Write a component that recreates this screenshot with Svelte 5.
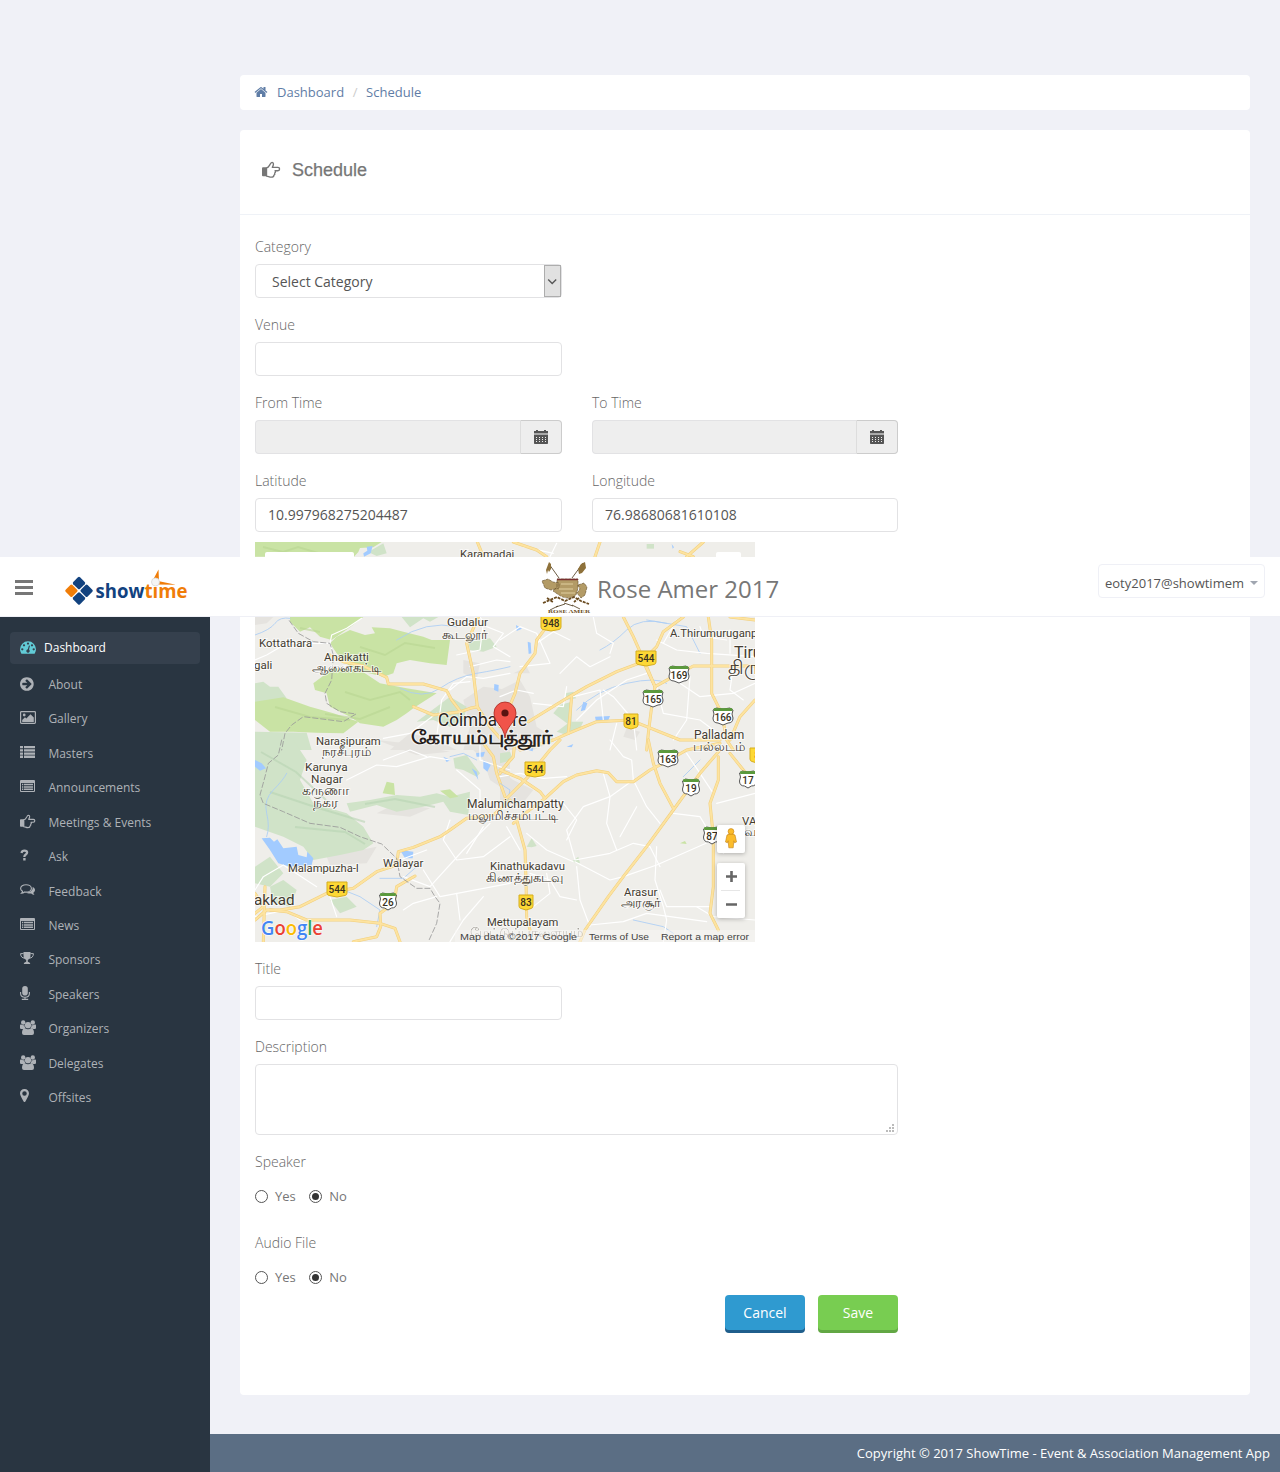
<script>
  const nav = [
    ['arrow', 'About'], ['picture', 'Gallery'], ['list', 'Masters'], ['listalt', 'Announcements'],
    ['hand', 'Meetings & Events'], ['question', 'Ask'], ['comments', 'Feedback'], ['listalt', 'News'],
    ['trophy', 'Sponsors'], ['mic', 'Speakers'], ['users', 'Organizers'], ['users', 'Delegates'], ['pin', 'Offsites']
  ];

  // Map geometry is split in four tiles, each with its own 3x coordinate space.
  const tiles = [
    {
      t: 'translate(-5 -2) scale(.33333)',
      green: ['M15 6H395L370 22 330 24 325 36 312 50H15Z', 'M120 231H340L300 262 245 300 210 290 180 262 150 275 120 245Z', 'M260 290L300 270 345 285 375 280 365 262 420 265 460 275 520 290 545 300 600 300 590 375 540 370 480 360 440 370 430 400 400 410 340 395 300 380 260 340 240 310Z', 'M190 430L250 385 330 390 390 430 470 445 560 460 520 485 490 505 470 520 440 540 400 560 330 550 300 530 240 500 230 460 195 450Z', 'M15 485L100 472 180 500 250 520 325 545 280 580 200 578 130 575 60 575 15 540Z'],
      pale: ['M15 430L40 425 60 440 85 440 110 475 60 500 15 510Z', 'M15 575L170 578 185 630H15Z', 'M655 305L720 295 740 320 700 335 660 330Z', 'M455 231H565L540 245 520 235 480 262Z', 'M560 500L600 470 650 500 640 545 600 560 550 540 500 545Z', 'M355 36L400 10 410 40 380 48Z'],
      grey: ['M640 480L700 440 780 450V630H640L660 560Z', 'M640 360L690 370 680 420 640 400Z', 'M420 630L480 580 560 600 620 630Z', 'M15 231H70L50 250 15 255Z'],
      water: ['M350 20L368 18 362 40 342 50 340 40 352 32Z', 'M733 432L746 435 745 455 732 450Z'],
      stream: ['M15 285Q60 270 75 250T120 235', 'M450 445Q520 480 570 445T680 400 780 380', 'M440 300Q530 240 620 260'],
      minor: ['M240 310L245 285 290 265 335 235', 'M240 310L250 345 270 360', 'M15 360L50 345 110 310 240 310', 'M690 231L710 260 760 280 730 320 780 350', 'M600 450L650 410 700 415 780 400', 'M560 590L575 480 610 430 660 425', 'M700 250L690 330 620 345', 'M660 380L740 360 780 365', 'M400 595L480 580 560 520'],
      major: ['M240 345L280 365 340 378 410 412 415 432 520 432 590 452 605 480 632 515 660 505 682 500', 'M685 231L650 310 670 400 682 500 720 560 755 600', 'M490 500L550 525 632 515', 'M682 6L700 50'],
      dash: ['M118 242L145 280 190 305 240 310 250 345 245 420 225 460 230 490 270 515 318 522 280 545 240 540 160 530 125 555 105 580 95 630']
    },
    {
      t: 'translate(245 -2) scale(.33333)',
      green: [],
      pale: ['M195 460L220 455 228 475 200 480Z', 'M180 495L215 485 215 560 160 520Z', 'M170 575L210 545 250 545 240 565 200 585Z', 'M440 12H462V26H440Z'],
      grey: ['M0 450L60 420 90 470 110 560 170 600 100 630H0Z', 'M370 590L380 565 420 575 405 600Z', 'M40 400L80 380 90 400Z'],
      water: ['M48 255L66 266 50 273Z', 'M83 305L92 308 94 340 86 342Z', 'M250 485L262 490 255 510 242 514Z', 'M285 530L330 528 325 540 288 544Z', 'M515 12L522 22 518 26Z'],
      stream: ['M230 510Q290 450 380 430T500 430', 'M300 330Q340 310 380 270T500 250', 'M440 240L560 260 600 340'],
      minor: ['M0 300L60 260 110 280 150 370 60 380', 'M110 310L160 275 210 300', 'M180 400L230 350 270 380 330 350', 'M280 231L290 280 340 310 330 340', 'M220 470L300 450 310 540', 'M230 540L290 480 380 420 440 400', 'M470 300L530 330 620 340 765 350', 'M530 240L490 310', 'M470 440L490 520 600 540 680 600', 'M540 430L600 470 700 460 765 430', 'M570 410L560 540 520 600', 'M690 270V340', 'M700 380L690 450 730 480', 'M350 550L330 630', 'M70 20L160 40', 'M170 10L150 50', 'M0 470L50 450 100 460', 'M600 260L610 290 680 300', 'M310 450L340 470 400 540 410 630', 'M100 490L190 500 200 440'],
      major: ['M140 260L110 300 105 340 60 400 45 460 20 520 0 560', 'M85 545L200 475 260 440 350 395 430 365 465 440', 'M370 231L400 290 440 380 465 440 455 500 445 580 440 630', 'M550 231L490 275 470 320 430 360', 'M215 470L205 580 160 600 60 630', 'M205 580L290 545 390 540 440 560 540 600 660 600', 'M465 440L510 415 580 378 765 378', 'M625 231L635 300 635 370 635 460 665 520 680 600 700 630', 'M765 480L720 530 690 600', 'M690 231L765 240', 'M300 6L285 50', 'M40 6L110 30 140 50', 'M610 6L560 50', 'M540 35L580 50'],
      dash: []
    },
    {
      t: 'translate(-5 198) scale(.33333)',
      green: ['M398 160L410 125 432 130 435 165Z', 'M570 152L600 148 625 170 600 175Z'],
      pale: ['M15 0H130L170 60 150 120 190 190 290 220 340 260 370 310 340 330 270 345 190 360 160 320 100 290 15 260Z', 'M290 190L360 180 440 165 510 170 560 160 600 170 660 155 655 225 600 215 580 185 520 200 440 215 380 195 300 215Z', 'M610 55L650 45 690 100 680 110 640 90 615 85Z', 'M15 380L60 350 100 400 60 440 15 430Z', 'M60 440L100 420 140 450 120 500 70 490Z', 'M240 480L290 470 320 500 270 520Z'],
      grey: ['M640 0H780V160L720 120 700 60Z', 'M380 220L440 190 540 205 480 230Z', 'M230 350L380 320 350 370 240 375Z', 'M380 0L470 10 600 35 500 45Z'],
      water: ['M15 60L35 70 48 85 30 92 15 80Z', 'M35 295L60 293 72 305 82 298 100 325 140 320 145 345 170 352 172 335 190 355 185 375 120 380 85 370 60 330Z', 'M450 330L490 335 488 355 465 355Z', 'M678 40L705 35 700 50 680 50Z', 'M700 60L722 75 712 95 700 85Z', 'M665 85L680 95 685 120Z', 'M580 50L602 60 590 66Z'],
      stream: ['M50 290Q60 260 50 220T70 150 110 100', 'M280 450L330 470 390 510 380 560', 'M390 415H460L500 380', 'M600 50L640 40 680 60'],
      minor: ['M290 120L350 90 380 75 440 80 540 50 600 60', 'M400 60L480 30 530 50', 'M620 90L690 150V190', 'M690 0L690 60 780 90', 'M15 450L40 410 100 375 200 440', 'M240 470L260 530', 'M460 410L540 440 640 330 720 250', 'M600 240L580 300 620 360 700 350 780 290', 'M520 390L570 470 780 430', 'M450 360L530 330', 'M650 340L700 260', 'M700 470L640 540 600 605', 'M460 510L490 490 560 470', 'M15 530L110 510 150 540 230 540', 'M620 460L630 540'],
      major: ['M780 180L730 225 650 235 600 270 570 290 490 322 445 335 440 375 380 395 310 445 230 460 150 500 90 510 50 510 15 540', 'M60 510L110 515 170 540 300 540 390 550 435 565 450 605', 'M495 408L440 440 432 490 390 520 392 560 380 590 310 605', 'M700 10L730 50 740 100 765 170', 'M750 100L780 60', 'M45 440L40 605', 'M15 460L40 500 15 520'],
      dash: ['M95 0L85 45 55 70 45 110 30 165 40 190 100 215 180 250 270 262 330 290 395 312 440 355 450 410 500 445 540 445 555 470 570 490 560 550 535 605']
    },
    {
      t: 'translate(245 198) scale(.33333)',
      green: ['M540 310L555 303 560 312Z'],
      pale: ['M80 320L95 295 110 318 95 322Z', 'M0 40L30 35 40 60 0 70Z', 'M215 365L235 350 240 370Z'],
      grey: ['M0 90L40 120 100 150 60 200 0 180Z'],
      water: ['M85 20L100 22 98 34 84 30Z', 'M200 20L220 12 215 22Z'],
      stream: ['M400 540L490 560 520 580', 'M0 130L30 150 20 200', 'M550 110L600 60'],
      minor: ['M330 0L370 50 395 60 400 120 440 200 480 250', 'M400 120L330 170 290 185 250 200 200 270 225 360 330 340 400 310 450 320 480 380', 'M225 365L330 420 370 410 470 375 550 340 640 300', 'M80 280L140 330 220 365', 'M230 380L240 480 270 560', 'M470 320L465 420 490 500 500 540 490 605', 'M270 555L370 545 440 520 620 545', 'M140 190L190 190 230 240 200 300', 'M480 450L500 500 630 500', 'M560 40L640 160', 'M520 220L600 230 630 280', 'M0 110L60 100 130 115 200 110', 'M310 100L330 170 320 250 350 330', 'M670 340L720 260', 'M20 260L60 330', 'M90 400L150 420 180 470 230 480', 'M410 200L360 290', 'M140 400L150 460 100 500', 'M650 190L765 160', 'M590 500L640 530 765 540'],
      major: ['M0 90L60 115 120 155 135 175 190 125 230 105 290 92 325 98 350 125 400 125 450 90 480 75 560 30 660 10', 'M15 180L85 110 150 30 180 0', 'M660 30L600 100 520 210 440 320 370 410 325 470 255 570 240 605', 'M445 0L460 70 480 130 520 205', 'M50 240L75 330 78 420 80 530 90 570', 'M135 175L75 220 40 250', 'M655 50L655 120 630 190 640 290 640 440 630 520 655 570', 'M690 40L730 90 765 130', 'M45 0L40 50 5 90'],
      dash: []
    }
  ];

  // text, x, baseline, font size
  const labels = [
    ['Karamadai', 460, 558, 11.3], ['Gudalur', 447, 626, 11.8], ['கூடலூர்', 442, 639, 13], ['Kottathara', 259, 647, 11.400],
    ['Anaikatti', 324, 661, 11.4], ['ஆனைகட்டி', 312, 672, 12.8], ['gali', 254, 669, 11.5], ['A.Thirumuruganp', 670, 637, 11.3],
    ['Narasipuram', 316, 745, 11.3], ['நரசீபுரம்', 322, 756, 12.7], ['Karunya', 305, 771, 11.8], ['Nagar', 311, 783, 11.8],
    ['கருணா', 302, 795, 13.6], ['நகர', 313, 807, 13.6], ['Malumichampatty', 467, 808, 12], ['மலுமிச்சம்பட்டி', 468, 820, 12.9],
    ['Walayar', 383, 867, 11.4], ['Malampuzha-I', 288, 872, 11.2], ['Kinathukadavu', 490, 870, 11.4], ['கிணத்துகடவு', 486, 882, 12.8],
    ['Arasur', 624, 896, 11.4], ['அரசூர்', 621, 907, 12.7], ['Mettupalayam', 487, 926, 11.2], ['Palladam', 694, 739, 12],
    ['பல்லடம்', 693, 751, 13.1], ['VA', 742, 825, 11.5], ['வ', 744, 836, 12.5], ['akkad', 254, 905, 15.2],
    ['Tiru', 734, 658, 16], ['திரு', 728, 674, 19]
  ];
  const yellow = [['948', 551, 623], ['544', 646, 658], ['81', 631, 721], ['544', 535, 769], ['544', 337, 889], ['83', 526, 902], ['8', 757, 755]];
  const white = [['169', 679, 674], ['165', 653, 698], ['166', 723, 716], ['163', 668, 758], ['19', 691, 787], ['17', 748, 779], ['87', 712, 835], ['26', 388, 901]];
</script>

{#snippet icon(name)}
  {#if name === 'dash'}
    <svg class="ic" viewBox="0 0 1792 1792"><path fill="currentColor" fill-rule="evenodd" d="M1792 1152q0 261-141 483-19 29-54 29H195q-35 0-54-29Q0 1414 0 1152 0 780 262 518T896 256t634 262 262 634zM256 1024a128 128 0 100 256 128 128 0 000-256zM448 576a128 128 0 100 256 128 128 0 000-256zM896 384a128 128 0 100 256 128 128 0 000-256zM1344 576a128 128 0 100 256 128 128 0 000-256zM1536 1024a128 128 0 100 256 128 128 0 000-256zM1004 1185l101-382q6-26-7.500-48.500t-38.500-29.500-48 6.500-30 39.500l-101 382q-60 5-107 43.500t-63 98.500q-20 77 20 146t117 89 146-20 89-117q16-60-6-117t-72-91z" /></svg>
  {:else if name === 'arrow'}
    <svg class="ic" viewBox="128 128 1792 1792"><path fill="currentColor" d="M1413 896q0-27-18-45l-91-91-362-362q-18-18-45-18t-45 18l-91 91q-18 18-18 45t18 45l189 189h-502q-26 0-45 19t-19 45v128q0 26 19 45t45 19h502l-189 189q-19 19-19 45t19 45l91 91q18 18 45 18t45-18l362-362 91-91q18-18 18-45zm251 0q0 209-103 385.500t-279.500 279.500-385.500 103-385.500-103-279.500-279.500-103-385.500 103-385.500 279.500-279.500 385.500-103 385.500 103 279.500 279.500 103 385.500z" transform="translate(0 128)" /></svg>
  {:else if name === 'picture'}
    <svg class="ic" viewBox="0 0 16 16"><rect x=".6" y="1.6" width="14.800" height="11.800" rx=".8" fill="none" stroke="currentColor" stroke-width="1.200" /><circle cx="4.200" cy="5" r="1.400" fill="currentColor" /><path fill="currentColor" d="M2.200 12V10L5 7.300l1.300 1.300 4.200-4.400L13.800 7.500V12z" /></svg>
  {:else if name === 'list'}
    <svg class="ic" viewBox="0 0 16 16"><path fill="currentColor" d="M0 1h3v2.300H0zM4 1h11v2.300H4zM0 4.200h3v2.300H0zM4 4.200h11v2.300H4zM0 7.400h3v2.300H0zM4 7.400h11v2.300H4zM0 10.600h3v2.300H0zM4 10.600h11v2.300H4z" /></svg>
  {:else if name === 'listalt'}
    <svg class="ic" viewBox="0 0 16 16"><path fill="currentColor" fill-rule="evenodd" d="M1 1h13q1 0 1 1v10q0 1-1 1H1q-1 0-1-1V2q0-1 1-1zm0 3v8h13V4zM2 4.800h1.300v1.500H2zM4 4.800h9v1.500H4zM2 7.200h1.300v1.500H2zM4 7.200h9v1.500H4zM2 9.600h1.300v1.500H2zM4 9.600h9v1.500H4z" /></svg>
  {:else if name === 'hand'}
    <svg class="ic" viewBox="0 0 16 16"><path fill="currentColor" d="M.8 5.200H4v7.600H.8q-.8 0-.8-.8V6q0-.8.8-.8z" /><path fill="none" stroke="currentColor" stroke-width="1.150" stroke-linejoin="round" d="M3.800 5.800C5.600 5.600 6.200 3.600 7 2.500c.5-.8.700-1.300 1.500-1.300 1.600.2 1.400 2 .2 4.200h4.700a1.400 1.400 0 010 2.800H11c.6.7.3 1.600-.3 2 .3.900-.1 1.500-.7 1.800 0 1.300-.7 1.600-2.200 1.600-1.800 0-2.500-.9-4-.9z" /></svg>
  {:else if name === 'question'}
    <svg class="ic" viewBox="0 0 16 16"><path fill="none" stroke="currentColor" stroke-width="2.300" d="M1.500 4.900C1.900 3.200 3 2.600 4.400 2.600c1.600 0 2.700.8 2.700 2 0 1.900-2.700 1.800-2.700 3.900v.4" /><path fill="currentColor" d="M3.200 10h2.400v2.500H3.200z" /></svg>
  {:else if name === 'comments'}
    <svg class="ic" viewBox="0 0 16 16"><path fill="none" stroke="currentColor" stroke-width="1.150" d="M6 1.700c3 0 5.400 1.600 5.400 3.700S9 9.100 6 9.100q-.8 0-1.500-.15Q3.200 10.100 1.500 10.200q1-.8 1-2C1.300 7.500.6 6.500.6 5.400.6 3.300 3 1.700 6 1.700z" /><path fill="currentColor" d="M12.600 4.100c1.500.7 2.400 1.700 2.400 2.900 0 1.100-.7 2-1.700 2.700.1.900.6 1.500 1.300 2-1.500 0-2.600-.5-3.300-1.300-2 .3-4.100 0-5.300-.9 3.800.1 7.200-1.600 6.600-5.400z" /></svg>
  {:else if name === 'trophy'}
    <svg class="ic" viewBox="0 0 16 16"><path fill="currentColor" d="M3.500 1h7v3.500c0 2.500-1.300 3.700-2.700 4.500v1.500c0 .8 2.500.7 2.500 2.500H3.700c0-1.800 2.500-1.700 2.500-2.500V9C4.800 8.200 3.500 7 3.500 4.500z" /><path fill="none" stroke="currentColor" d="M3.600 2.600H.6c0 3 1.500 4.400 4.200 4.600M10.400 2.600h3c0 3-1.500 4.400-4.200 4.600" /></svg>
  {:else if name === 'mic'}
    <svg class="ic" viewBox="0 0 16 16"><rect x="2.200" y="0" width="5.600" height="9.600" rx="2.800" fill="currentColor" /><path fill="none" stroke="currentColor" stroke-width="1.100" d="M.6 6v1.500c0 2.400 2 3.700 4.400 3.700s4.400-1.300 4.400-3.700V6M5 11v2.400M1.800 13.400h6.400" /></svg>
  {:else if name === 'users'}
    <svg class="ic" viewBox="0 0 16 16"><g fill="currentColor"><circle cx="3.200" cy="2.500" r="2.200" /><circle cx="12.800" cy="2.500" r="2.200" /><circle cx="8" cy="5.200" r="3.100" /><path d="M0 5.500Q0 4 1.200 4.500q1.800 1 3.300.4-.2 2 1 3.200-1.300 0-2 .9H1.200Q0 9 0 7.900zM16 5.500q0-1.500-1.200-1-1.800 1-3.300.4.200 2-1 3.200 1.300 0 2 .9h2.300Q16 9 16 7.900zM2 13q0-4.700 3-4.700 3 2 6 0 3 0 3 4.700 0 2-2 2H4q-2 0-2-2z" /></g></svg>
  {:else if name === 'pin'}
    <svg class="ic" viewBox="0 0 16 16"><path fill="currentColor" fill-rule="evenodd" d="M4.500 0A4.400 4.400 0 019 4.500C9 6.200 7 9.500 5.400 12.600q-.9 1-1.800 0C2 9.500 0 6.200 0 4.500A4.400 4.400 0 014.500 0zm0 2.200a2.200 2.200 0 100 4.500 2.200 2.200 0 000-4.500z" /></svg>
  {:else if name === 'home'}
    <svg class="ic" viewBox="0 0 1792 1792"><path fill="currentColor" d="M1472 992v480q0 26-19 45t-45 19h-384v-384h-256v384h-384q-26 0-45-19t-19-45v-480q0-1 .5-3t.5-3l575-474 575 474q1 2 1 6zm223-69l-62 74q-8 9-21 11h-3q-13 0-21-7l-692-577-692 577q-12 8-24 7-13-2-21-11l-62-74q-8-10-7-23.500t11-21.500l719-599q32-26 76-26t76 26l244 204v-195q0-14 9-23t23-9h192q14 0 23 9t9 23v408l219 182q10 8 11 21.500t-7 23.500z" /></svg>
  {:else if name === 'calendar'}
    <svg class="cal" viewBox="0 0 14 14"><path fill="currentColor" fill-rule="evenodd" d="M2 0h2v1h6V0h2v1h2v2H0V1h2zM0 5h14v8.200q0 .8-.8.800H.8q-.8 0-.8-.8zm2 2v1h1V7zm3 0v1h1V7zm3 0v1h1V7zm3 0v1h1V7zM2 9v1h1V9zm3 0v1h1V9zm3 0v1h1V9zm3 0v1h1V9zM2 11v1h1v-1zm3 0v1h1v-1zm3 0v1h1v-1zm3 0v1h1v-1z" /><path fill="#aaa" d="M0 3h14v2H0z" /></svg>
  {/if}
{/snippet}

{#snippet radios()}
  <div class="radios">
    <span class="dot"></span><span class="opt">Yes</span>
    <span class="dot on"></span><span class="opt">No</span>
  </div>
{/snippet}

<div class="page">
  <aside>
    <div class="active">{@render icon('dash')}<span>Dashboard</span></div>
    <nav>
      {#each nav as [ic, text]}
        <div class="item">{@render icon(ic)}<span>{text}</span></div>
      {/each}
    </nav>
  </aside>

  <div class="content">
    <main>
      <div class="crumbs">{@render icon('home')}<span>Dashboard</span><i>/</i><span>Schedule</span></div>
      <section class="panel">
        <div class="head">{@render icon('hand')}<h1>Schedule</h1></div>
        <div class="form">
          <div class="field half"><div class="label">Category</div>
            <div class="input select"><span>Select Category</span><b><svg viewBox="0 0 15 30"><path d="M3.200 13.500l4 4 4-4" fill="none" stroke="#555" stroke-width="1.300" /></svg></b></div>
          </div>
          <div class="field half"><div class="label">Venue</div><div class="input"></div></div>
          <div class="row">
            {#each ['From Time', 'To Time'] as name}
              <div class="field"><div class="label">{name}</div>
                <div class="group"><div class="input off"></div><div class="addon">{@render icon('calendar')}</div></div>
              </div>
            {/each}
          </div>
          <div class="row">
            <div class="field"><div class="label">Latitude</div><div class="input value">10.997968275204487</div></div>
            <div class="field"><div class="label">Longitude</div><div class="input value">76.98680681610108</div></div>
          </div>

          <svg class="map" viewBox="0 0 500 400">
            <rect width="500" height="400" fill="#efeeea" />
            {#each tiles as t}
              <g transform={t.t}>
                {#each t.grey as d}<path {d} fill="#e5e3df" />{/each}
                {#each t.pale as d}<path {d} fill="#d0e3c8" />{/each}
                {#each t.green as d}<path {d} fill="#c9e3a4" />{/each}
                {#each t.water as d}<path {d} fill="#a2cbff" />{/each}
              </g>
            {/each}
            <g fill="none" stroke="#b9d693" stroke-width="2" opacity=".6">
              <path d="M8 5l20 5 15-5 20 6M45 86l20 4M105 105l25 8 20-12 30 5M90 150l25 8 30-8 10 8M70 172l35 5 30-12M20 165l35 10 40 3" />
              <path stroke="#b8d3b3" d="M6 210l35 20 30 28M15 250l45 15 50 15M40 285l50 5 20 12M110 262l30-5 40 8" />
            </g>
            {#each tiles as t}
              <g transform={t.t} fill="none" stroke-linejoin="round" stroke-linecap="round">
                {#each t.stream as d}<path {d} stroke="#a9cdf5" stroke-width="2.500" />{/each}
                {#each t.minor as d}<path {d} stroke="#fff" stroke-width="3.500" />{/each}
                {#each t.major as d}<path {d} stroke="#f1cf7c" stroke-width="9" />{/each}
                {#each t.major as d}<path {d} stroke="#fde3a0" stroke-width="6" />{/each}
                {#each t.dash as d}<path {d} stroke="#999" stroke-width="2.500" stroke-dasharray="16 8" />{/each}
              </g>
            {/each}
            <g transform="translate(-255 -542)">
              {#each yellow as [n, x, y]}
                <path d="M{x - (n.length > 2 ? 10 : 7)} {y - 7}h{n.length > 2 ? 20 : 14}v11q0 2-2 2.500l-{n.length > 2 ? 8 : 5} 1.500-{n.length > 2 ? 8 : 5}-1.500q-2-.5-2-2.500z" fill="#fdd835" stroke="#d5ad1f" />
                <text class="num" {x} y={y + 3.500}>{n}</text>
              {/each}
              {#each white as [n, x, y]}
                {@const w = n.length > 2 ? 10 : 8.500}
                <path d="M{x - w} {y - 6}q2-1 3-2l{w - 3} 1 {w - 3}-1q1 1 3 2-2 4 0 8 0 5-5 5l-{w - 5} 2-{w - 5}-2q-5 0-5-5 2-4 0-8z" fill="#fff" stroke="#555" />
                <path d="M{x - w + 1} {y - 5.500}h{2 * w - 2}v-1.800h-{2 * w - 2}z" fill="#5b9a3c" stroke="#5b9a3c" />
                <text class="num" {x} y={y + 4.500}>{n}</text>
              {/each}
              {#each labels as [s, x, y, size]}<text class="place" {x} {y} font-size={size}>{s}</text>{/each}
              <text class="place city" x="438" y="726" font-size="17.500" textLength="89" lengthAdjust="spacingAndGlyphs">Coimbatore</text>
              <text class="place city bold" x="411" y="743.500" font-size="19" textLength="142" lengthAdjust="spacingAndGlyphs">கோயம்புத்தூர்</text>
              <path d="M505 738c-1.500-13-11-15-11-25a11 11 0 0122 0c0 10-9.500 12-11 25z" fill="#f0544a" stroke="#a92720" stroke-width=".8" /><circle cx="505" cy="713" r="3.600" fill="#571411" />
              <text class="place" x="470" y="937" font-size="12.500" opacity=".5">மேட்டுப்பாளையம்</text>
              <rect x="455" y="930" width="300" height="12" fill="#f7f6f3" opacity=".5" />
              <g class="legal"><text x="460" y="940" textLength="117" lengthAdjust="spacingAndGlyphs">Map data ©2017 Google</text><text x="589" y="940" textLength="60" lengthAdjust="spacingAndGlyphs">Terms of Use</text><text x="661" y="940" textLength="88" lengthAdjust="spacingAndGlyphs">Report a map error</text></g>
              <text class="google" x="261" y="934.500" textLength="62" lengthAdjust="spacingAndGlyphs"><tspan fill="#4285f4">G</tspan><tspan fill="#ea4335">o</tspan><tspan fill="#fbbc05">o</tspan><tspan fill="#4285f4">g</tspan><tspan fill="#34a853">l</tspan><tspan fill="#ea4335">e</tspan></text>
              <g fill="#fff"><rect x="265" y="552" width="89" height="29" rx="2" /><rect x="716" y="552" width="25" height="25" rx="2" /></g>
              <g class="ctl"><rect x="717" y="825" width="28" height="28" rx="2" /><rect x="717" y="863" width="28" height="55" rx="2" /></g>
              <path d="M721 890.500h19" stroke="#e6e6e6" /><path d="M726 876.500h11M731.500 871v11M726 904.500h11" stroke="#666" stroke-width="2.600" />
              <g fill="#fbbc2b" stroke="#c27f10" stroke-width=".6"><path d="M727 835q4-3 8 0l1.500 7-2 .8-.7-2-.6 7h-4.400l-.6-7-.7 2-2-.8z" /><circle cx="731" cy="831.500" r="2.900" /></g>
            </g>
          </svg>

          <div class="field half"><div class="label">Title</div><div class="input"></div></div>
          <div class="field tall"><div class="label">Description</div>
            <div class="input area"><svg viewBox="0 0 9 9"><path fill="#bbb" d="M6 0h2v2H6zM6 3h2v2H6zM6 6h2v2H6zM3 3h2v2H3zM3 6h2v2H3zM0 6h2v2H0z" /></svg></div>
          </div>
          <div class="choice"><div class="label">Speaker</div>{@render radios()}</div>
          <div class="choice"><div class="label">Audio File</div>{@render radios()}</div>
          <div class="buttons"><button class="cancel">Cancel</button><button class="save">Save</button></div>
        </div>
      </section>
    </main>
    <footer>Copyright © 2017 ShowTime - Event &amp; Association Management App</footer>
  </div>

  <header>
    <div class="left">
      <svg class="bars" viewBox="0 0 18 15"><path fill="#777" d="M0 0h18v3H0zM0 6h18v3H0zM0 12h18v3H0z" /></svg>
      <svg class="logo" viewBox="64 567 125 42">
        <g fill="#12427f"><rect x="74.200" y="578.300" width="9.600" height="9.600" rx="1.500" transform="rotate(45 79 583.100)" /><rect x="81.800" y="585.900" width="9.600" height="9.600" rx="1.500" transform="rotate(45 86.600 590.700)" /><rect x="74.200" y="593.600" width="9.600" height="9.600" rx="1.500" transform="rotate(45 79 598.400)" /></g>
        <rect x="66.600" y="585.900" width="9.600" height="9.600" rx="1.500" fill="#f07d08" transform="rotate(45 71.400 590.700)" />
        <text x="95.500" y="597.500" textLength="92" lengthAdjust="spacingAndGlyphs"><tspan fill="#12427f">show</tspan><tspan fill="#f07d08">tıme</tspan></text>
        <path fill="#f07d08" d="M153.500 579L158.500 569.500 159 581zM158 581L176 584.800 158 584.500z" /><circle cx="155.500" cy="582" r="4" fill="#f5f5f5" stroke="#d5d5d5" stroke-width=".8" />
      </svg>
    </div>
    <div class="event">
      <svg viewBox="541 559 50 54">
        <path fill="none" stroke="#493516" stroke-width=".8" d="M549 563l10 14M583 562l-11 15M556 606l9-3M573 605l-9-3M550 609l8-4M580 608l-8-4" />
        <path fill="#8e713a" d="M549 561l2 2 0 5-2 3-1-2-1 4-1-4zM581 563l4-2 1 6-4 5-3 1-1-5z" />
        <path fill="#b39b66" stroke="#5f4a26" stroke-width=".6" stroke-dasharray="3 .8" d="M542 580l6-2 5 3 6 1v5l-8 2-6-2zM557 578h21v9l-2 7q-8 6-17 0l-6-4 4-4zM578 584l6-2 3 4-2 8-4 3-4-5 3-4z" />
        <path stroke="#7a3030" stroke-width="1.500" d="M557 578.500h21" /><path fill="none" stroke="#e1cf9f" d="M561 583h12M559 588h14M561 592h14" />
        <path fill="none" stroke="#6a4b20" stroke-width="1.800" stroke-dasharray="3 1" d="M543 602l7-3 7-3 8 4 9-4 7 4 8 3M547 597l6 4M579 597l-5 4" />
        <text x="548" y="611.500" textLength="42" lengthAdjust="spacingAndGlyphs">ROSE AMER</text>
      </svg>
      <span>Rose Amer 2017</span>
    </div>
    <div class="user"><span>eoty2017@showtimem</span><i></i></div>
  </header>
</div>

<style>
  :global(body) { background: #f0f1f7; font-family: 'Open Sans', sans-serif; font-size: 13px; color: #767676; }
  .page, .page * { box-sizing: border-box; }
  .page { position: relative; display: flex; width: 1280px; height: 1472px; overflow: hidden; }
  .ic { display: block; width: 16px; height: 16px; flex: none; }
  aside { width: 210px; margin-top: 617px; padding: 15px 10px; background: #293541; color: #aeb2b7; font-size: 12px; flex: none; }
  .active { display: flex; align-items: center; height: 32px; padding: 0 0 2px 10px; border-radius: 4px; background: #35404d; color: #fff; }
  .active .ic { margin-right: 8px; color: #62cbd6; }
  nav { margin-top: 3px; }
  .item { display: flex; align-items: center; height: 34.480px; padding-left: 10px; }
  .item .ic { margin: -1px 12px 0 0; }
  .item span { padding-left: .4px; }
  .content { flex: 1; display: flex; flex-direction: column; }
  main { flex: 1; padding: 75px 30px 0; }
  .crumbs { display: flex; align-items: center; height: 35px; padding: 0 14px 2px; background: #fff; border-radius: 4px; color: #5f7da6; }
  .crumbs .ic { width: 14px; height: 14px; margin: 1px 9px 0 0; }
  .crumbs i { width: 22px; text-align: center; color: #ccc; font-style: normal; }
  .panel { height: 1265px; margin-top: 20px; background: #fff; border-radius: 4px; }
  .head { display: flex; align-items: center; height: 85px; padding: 0 22px 3px; border-bottom: 1px solid #eff2f7; }
  .head .ic { width: 19px; height: 19px; }
  h1 { margin: 0 0 0 11px; font: 400 18px 'Liberation Sans', sans-serif; -webkit-text-stroke: .25px #767676; }
  .form { width: 673px; padding: 22px 15px 0; }
  .field { height: 78px; }
  .half { width: 307px; }
  .row { display: grid; grid-template-columns: 307px 306px; gap: 30px; }
  .row .field { min-width: 0; }
  .label { height: 27px; font-size: 14px; font-weight: 300; line-height: 20px; color: #666; }
  .input { display: flex; align-items: center; height: 34px; padding: 0 12px; border: 1px solid #e2e2e4; border-radius: 4px; font-size: 14px; color: #555; }
  .value { padding-bottom: 2px; }
  .select { justify-content: space-between; padding: 0 0 0 16px; }
  .select b { width: 17px; height: 32px; background: #e1e1e1; border: 1px solid #adadad; }
  .select svg { display: block; width: 15px; height: 30px; }
  .group { display: flex; }
  .off { flex: 1; background: #eee; border-radius: 4px 0 0 4px; border-right: 0; }
  .addon { display: grid; place-items: center; width: 42px; height: 34px; background: #eee; border: 1px solid #ccc; border-left-color: #ddd; border-radius: 0 4px 4px 0; color: #555; }
  .cal { width: 14px; height: 14px; margin-right: 1px; }
  .map { display: block; width: 500px; height: 400px; margin: -7px 0 17px; }
  .place { font-family: Roboto, 'Noto Sans', sans-serif; fill: #433c31; stroke: #fff; stroke-opacity: .65; stroke-width: 2px; paint-order: stroke; }
  .city { fill: #28231d; }
  .bold { font-weight: 700; }
  .num { font: 500 10px Roboto, sans-serif; fill: #383020; text-anchor: middle; }
  .legal { font: 9.500px 'Liberation Sans', sans-serif; fill: #444; }
  .google { font: 600 20px 'Open Sans', sans-serif; stroke: #fff; stroke-width: 1px; paint-order: stroke; }
  .ctl { fill: #fff; filter: drop-shadow(0 1px 2px #0004); }
  .tall { height: 115px; }
  .area { height: 71px; align-items: flex-end; justify-content: flex-end; padding: 0 2px 1px; }
  .area svg { width: 9px; height: 9px; }
  .choice { height: 81px; }
  .choice .label { height: 36px; }
  .radios { display: flex; align-items: center; height: 16px; }
  .dot { display: grid; place-items: center; width: 13px; height: 13px; margin-top: 1px; border: 1px solid #555; border-radius: 50%; }
  .on::after { content: ''; width: 7px; height: 7px; border-radius: 50%; background: #333; }
  .opt { margin: 0 13px 0 7px; }
  .on + .opt { padding-left: .5px; }
  .buttons { display: flex; justify-content: flex-end; gap: 13px; margin-top: -19px; }
  button { width: 80px; height: 35px; padding: 0 0 1px; border: 0; border-radius: 4px; color: #fff; font: 14px 'Open Sans', sans-serif; }
  .cancel { background: #2f9ad0; box-shadow: 0 3px 0 #1f5e8c; }
  .save { background: #78cd51; box-shadow: 0 3px 0 #62a744; }
  footer { height: 38px; padding-right: 10px; background: #5b6e84; color: #fff; line-height: 38px; text-align: right; }
  header { position: absolute; top: 557px; left: 0; display: grid; grid-template-columns: 541px 1fr auto; width: 1280px; height: 60px; background: #fff; border-bottom: 1px solid #eff0f6; }
  .left { display: flex; padding-left: 15px; }
  .bars { width: 18px; height: 15px; margin-top: 23px; }
  .logo { width: 125px; height: 42px; margin: 10px 0 0 31px; }
  .logo text { font: 700 20px 'Open Sans', sans-serif; }
  .event { display: flex; align-items: center; color: #777; font-size: 24px; }
  .event svg { width: 50px; height: 54px; margin-right: 6px; }
  .event span { margin-top: 4px; }
  .event text { font: 700 5px 'Liberation Serif', serif; fill: #6a4b20; }
  .user { display: flex; align-items: center; justify-content: space-between; width: 167px; height: 34px; margin: 7px 15px 0 0; padding: 4px 6px 0; border: 1px solid #eff0f6; border-radius: 4px; color: #555; }
  .user i { border: 4px solid transparent; border-top-color: #a0a6b0; border-bottom: 0; }
</style>
